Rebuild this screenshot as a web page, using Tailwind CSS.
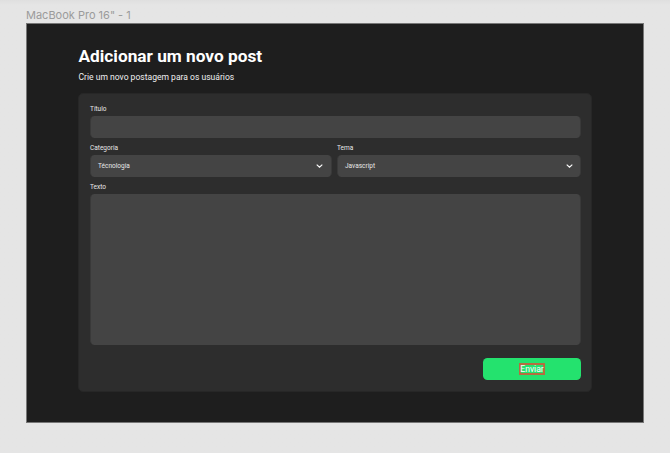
<!DOCTYPE html>
<html lang="pt-BR">
<head>
<meta charset="utf-8">
<title>Adicionar um novo post</title>
<script src="https://cdn.jsdelivr.net/npm/@tailwindcss/browser@4"></script>
</head>
<body class="h-[453px] w-[670px] overflow-hidden bg-[#e5e5e5] font-[Roboto,sans-serif]">
<div class="flex h-full flex-col bg-linear-to-b from-[#dfdfdf] to-[#e5e5e5] to-[5px] pl-[26px] pt-[8px]">
  <div class="h-[15px] shrink-0 whitespace-nowrap font-[Inter,sans-serif] text-[11px] leading-[15px] text-[#9b9b9b]"><span>MacBook Pro 16" - 1</span></div>
  <main class="flex h-[400px] w-[618px] shrink-0 flex-col border border-[#777] bg-[#1e1e1e] pl-[51px] text-white">
    <h1 class="ml-[0.5px] mt-[20px] h-[24px] whitespace-nowrap text-[17.25px] font-bold leading-[24px]"><span>Adicionar um novo post</span></h1>
    <p class="ml-[0.5px] mt-[3px] h-[12px] whitespace-nowrap text-[8.55px] leading-[12px] text-[#f0f0f0]"><span>Crie um novo postagem para os usuários</span></p>
    <form class="mt-[10px] flex h-[299px] w-[514px] flex-col rounded-[5px] border border-[#272727] bg-[#2d2d2d] pl-[11px] pr-[10px] pt-[10px] text-[6.5px] leading-[10px] text-[#e8e8e8]">
      <label class="h-[10px]"><span>Título</span></label>
      <div class="mt-[2px] h-[22px] rounded-[4.5px] border-x border-[#393939] bg-[#444]"></div>
      <div class="mt-[5px] flex gap-[5px]">
        <div class="w-[242px]">
          <label class="block h-[10px]"><span>Categoria</span></label>
          <div class="mt-[2px] flex h-[22px] items-center justify-between rounded-[4.5px] border-x border-[#393939] bg-[#444] pl-[7px] pr-[8px]">
            <span>Técnologia</span>
            <svg class="h-[4px] w-[7px]" viewBox="0 0 7 4" fill="none" stroke="#fff" stroke-width="1.1"><path d="M.7.6 3.5 3.2 6.3.6"/></svg>
          </div>
        </div>
        <div class="flex-1">
          <label class="block h-[10px]"><span>Tema</span></label>
          <div class="mt-[2px] flex h-[22px] items-center justify-between rounded-[4.5px] border-x border-[#393939] bg-[#444] pl-[7px] pr-[7px]">
            <span>Javascript</span>
            <svg class="h-[4px] w-[7px]" viewBox="0 0 7 4" fill="none" stroke="#fff" stroke-width="1.1"><path d="M.7.6 3.5 3.2 6.3.6"/></svg>
          </div>
        </div>
      </div>
      <label class="mt-[5px] h-[10px]"><span>Texto</span></label>
      <div class="mt-[2px] h-[151px] rounded-[4.5px] border-x border-[#393939] bg-[#444]"></div>
      <button type="button" class="mt-[13px] flex h-[22px] w-[98px] items-center justify-center self-end rounded-[4.5px] bg-[#24e26e] text-white">
        <span class="flex h-[12px] w-[26px] items-center justify-center border-2 border-[#b66c40] text-[8.6px] leading-[8px]">Enviar</span>
      </button>
    </form>
  </main>
</div>
</body>
</html>
